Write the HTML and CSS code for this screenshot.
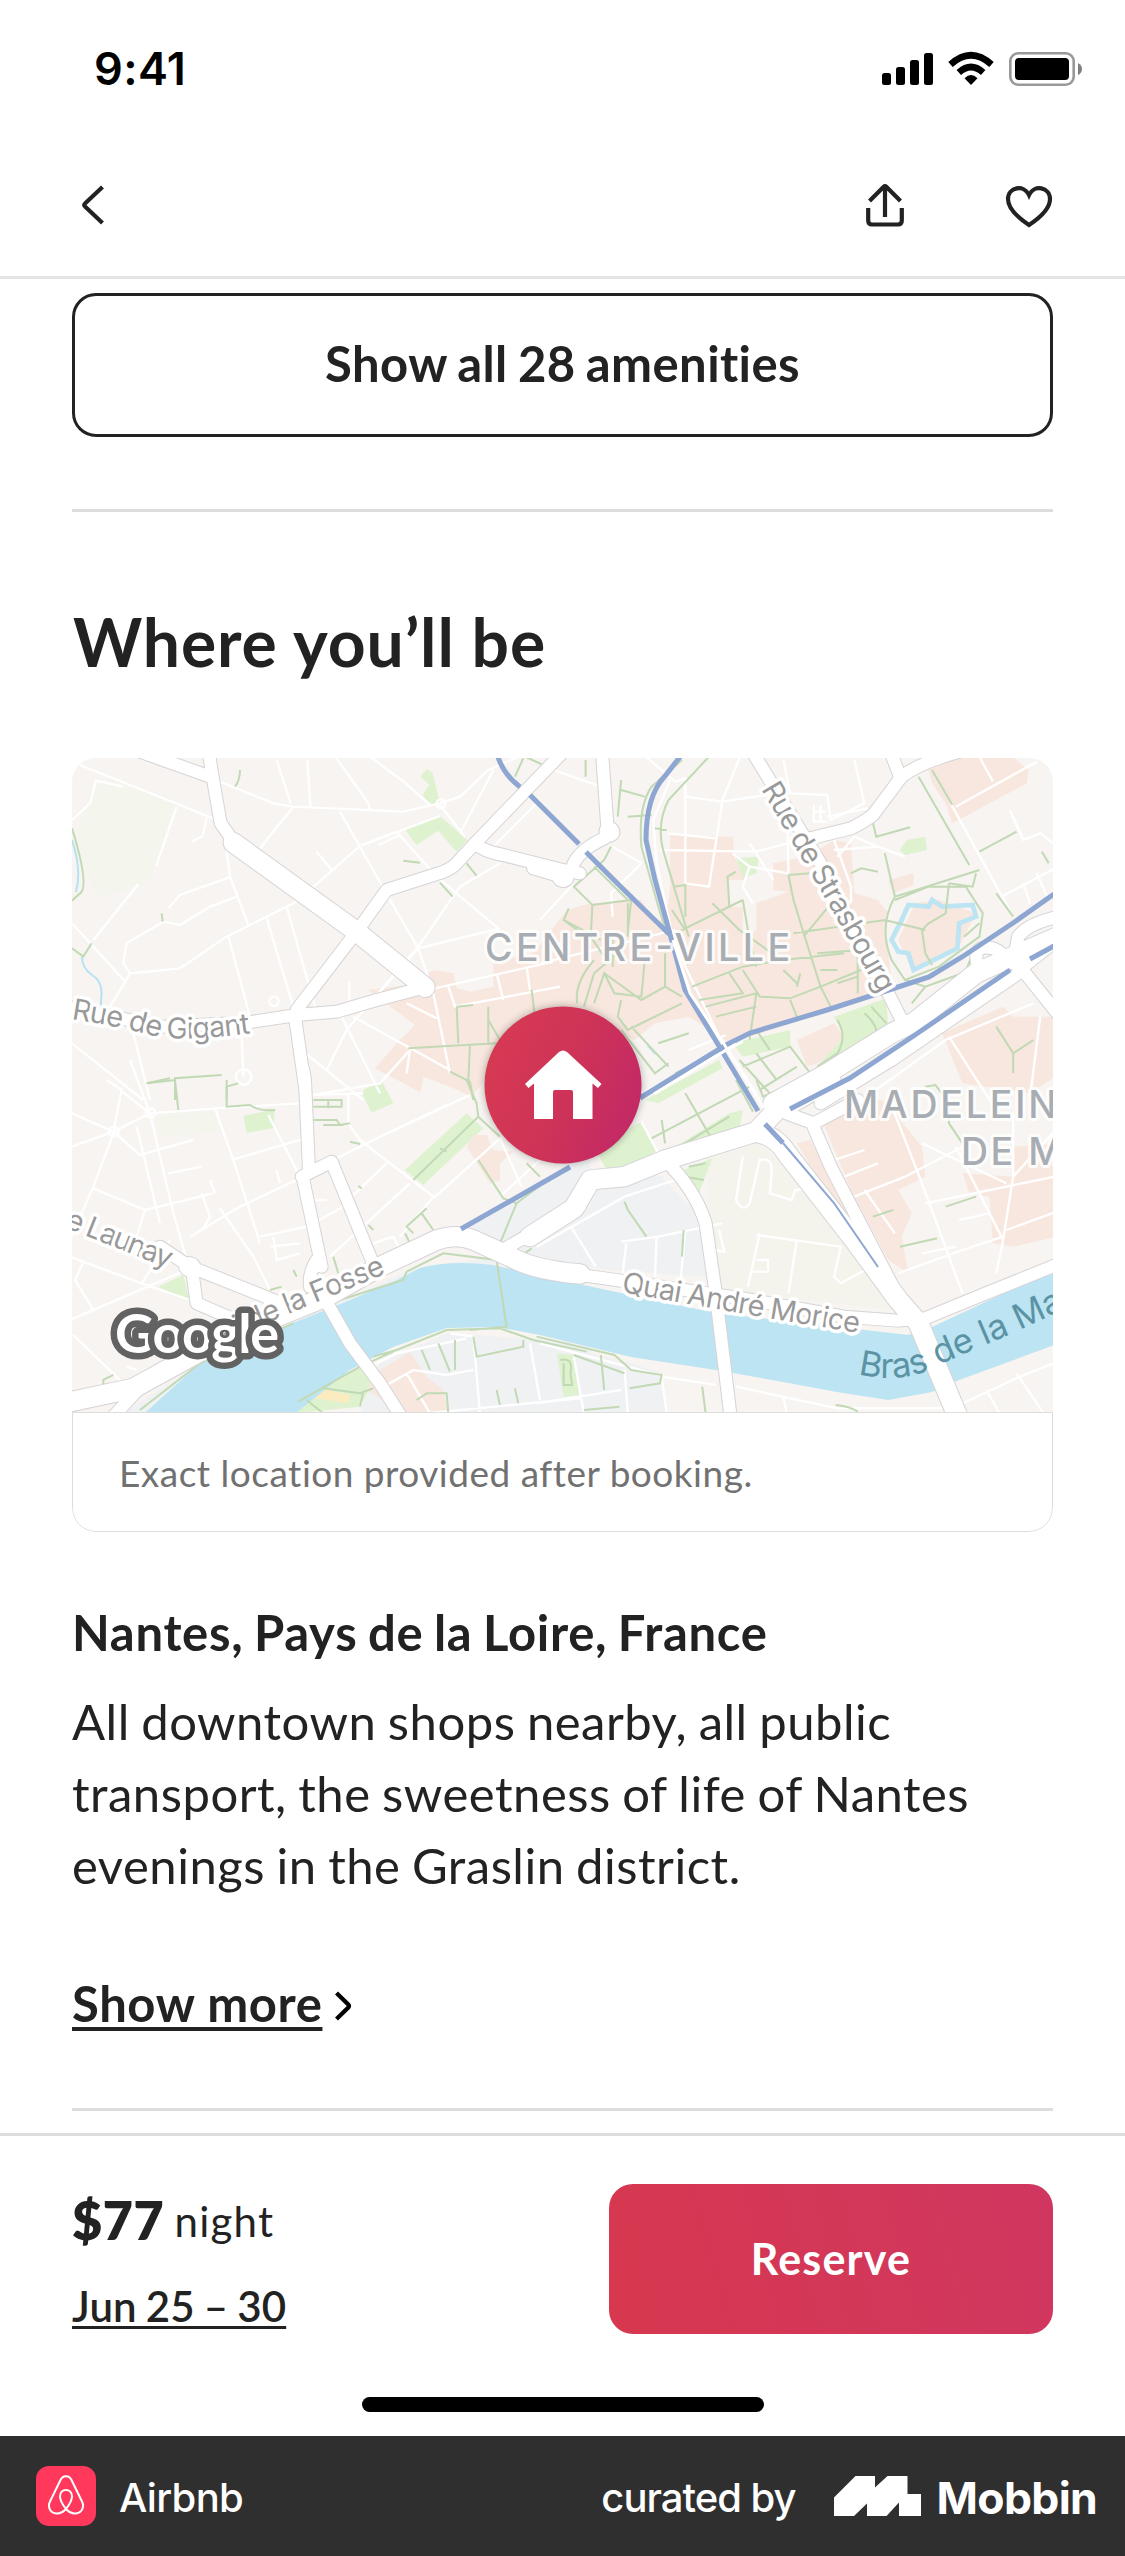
FILE: index.html
```
<!DOCTYPE html>
<html lang="en">
<head>
<meta charset="utf-8">
<title>Where you’ll be</title>
<link rel="stylesheet" href="styles.css">
</head>
<body>
<div class="screen">
  <header class="top">
    <div class="status">
      <span class="clock">9:41</span>
      <svg class="status-icons" width="202" height="36" viewBox="881 51 202 36" aria-hidden="true">
        <rect x="882" y="73" width="9" height="12" rx="2.5"/>
        <rect x="896" y="67" width="9" height="18" rx="2.5"/>
        <rect x="910" y="60" width="9" height="25" rx="2.5"/>
        <rect x="924" y="53" width="9" height="32" rx="2.5"/>
        <g fill="none" stroke="#000" stroke-width="6.6">
          <path d="M950.5 64.500Q971 46 991.500 64.500"/>
          <path d="M958.800 72.500Q971 61.500 983.200 72.500"/>
        </g>
        <path d="M964.500 78.200Q971 72 977.500 78.200L971 85Z"/>
        <rect x="1010.300" y="53.300" width="63.400" height="31.400" rx="8" fill="none" stroke="#999" stroke-width="2.600"/>
        <rect x="1015" y="58" width="54" height="22" rx="4"/>
        <path d="M1078 63Q1082 65 1082 69T1078 75Z" fill="#808080"/>
      </svg>
    </div>
    <nav class="nav">
      <svg width="24" height="46" viewBox="81 183 24 46" fill="none" stroke="#222" stroke-width="4.200" aria-label="Back"><path d="M102.500 186L85 202.500Q83.300 204 85 205.500L102.500 222"/></svg>
      <span class="nav-actions">
        <svg width="40" height="46" viewBox="865 183 40 46" fill="none" stroke="#222" stroke-width="4.200" aria-label="Share"><path d="M885 216V185M869.500 200L883.500 186Q885 184.500 886.500 186L900.500 200M868.200 207V219.500Q868.200 223.500 872 223.500H898Q901.800 223.500 901.800 219.500V207"/></svg>
        <svg width="48" height="46" viewBox="1005 184 48 46" fill="none" stroke="#222" stroke-width="4.200" aria-label="Save"><path d="M1029 225C1017 217 1008 208 1008 199C1008 187 1024 184 1029 195C1034 184 1050 187 1050 199C1050 208 1041 217 1029 225Z"/></svg>
      </span>
    </nav>
  </header>

  <main class="content">
    <button class="amenities">Show all 28 amenities</button>
    <hr class="rule rule-first">
    <h1 class="heading">Where you’ll be</h1>

    <section class="map-card">
      <svg class="map" viewBox="72 758 981 654" width="981" height="654" role="img" aria-label="Map of Nantes">
        <defs>
          <linearGradient id="pin" x1="0" y1="0.300" x2="1" y2="0.700"><stop offset="0" stop-color="#d63a52"/><stop offset="0.500" stop-color="#cf3357"/><stop offset="1" stop-color="#c22966"/></linearGradient>
          <path id="l-gigant" d="M71 1019Q122 1027 150 1035T252 1033"/>
          <path id="l-stras" d="M761 789L811 874L849 940L895 1022"/>
          <path id="l-launay" d="M64 1227L172 1270"/>
          <path id="l-fosse" d="M190 1358L262 1325L387 1273L405 1266"/>
          <path id="l-quai" d="M621 1292L689 1304L773 1319L865 1334"/>
          <path id="l-bras" d="M858 1374Q905 1386 945 1362L1013 1333L1110 1288"/>

          <g id="major">
            <g transform="translate(60 740) scale(.3333)">
              <path class="w40" d="M445 30L462 135L482 250L525 310M240 35L450 110M1245 310Q1270 335 1330 345L1500 388L1560 400"/>
              <path class="w60" d="M520 308L890 575L1095 742"/>
              <path class="w40" d="M1520 25L1245 310L1185 375Q1160 395 1130 402L980 450L890 575L710 810"/>
              <path class="w40" d="M1095 742L950 780L830 815L710 825L560 848L300 860L20 800M705 830L735 1040"/>
            </g>
            <g transform="translate(540 740) scale(.338 .3333)">
              <path class="w40" d="M183 30L200 270Q205 290 180 300Q120 330 100 370Q90 410 70 412L-20 385"/>
              <path class="w60" d="M66 411L70 412M205 275L206 276"/>
              <path class="w40" d="M625 30L830 370L1010 720L1070 840M1240 35Q1120 70 1070 110L985 225Q960 245 920 265L760 305M1035 30L1065 110"/>
              <path class="w60" d="M690 1090L850 1000L1040 880L1110 845L1290 700L1420 640L1600 560"/>
              <path class="w40" d="M830 1090L1040 960L1430 690M1420 680L1570 870M1300 690Q1270 610 1340 625Q1400 650 1330 680M1590 520Q1450 540 1415 590L1400 670M1430 680L1580 560"/>
            </g>
            <g transform="translate(60 1080) scale(.3333)">
              <path class="w40" d="M730 -30L735 0L747 270M725 290L815 245L937 545M728 290L785 560M770 540Q745 580 750 620M300 500L390 560L640 660L700 690M395 560L410 670L560 735M1320 515L1500 410L1560 380M160 1010L260 900"/>
              <path class="w60" d="M387 560L392 562"/>
              <path class="w60" d="M20 968L220 925L420 815L640 715L800 650L960 560L1130 480Q1190 460 1240 480L1350 530Q1420 570 1560 582"/>
              <path class="w40" d="M785 640L870 790L960 910L1030 1020"/>
            </g>
            <g transform="translate(540 1080) scale(.338 .3333)">
              <path class="w60" d="M-30 470L100 385L150 300L250 290L370 240L640 155L700 90L760 60L860 0M650 160Q700 170 730 220L930 480L1060 660L1120 730L1240 1020"/>
              <path class="w40" d="M370 240Q460 330 490 430L520 640L565 1020M940 60L810 130L730 100M805 130L860 260L1080 690"/>
              <path class="w40" d="M-20 565L190 595L600 655L900 710L1060 722L1140 715L1320 640L1600 525"/>
            </g>
          </g>
        </defs>

        <rect x="72" y="758" width="981" height="654" fill="#f7f4f1"/>

        <!-- built-up, green and industrial areas -->
        <g transform="translate(60 740) scale(.3333)">
          <path class="meadow" d="M95 150L150 120L360 195L260 430L120 470L36 330Z"/>
          <path class="peach" d="M925 750L1045 735L1120 690L1180 700L1190 745L1230 755L1300 740L1300 670L1560 600L1560 820L1400 820L1290 1000L1235 1070L1170 1040L1090 1010L1080 1055L945 985L1020 900L1065 855Z"/>
          <path class="park" d="M1035 268L1140 228L1222 300L1190 335L1135 272L1070 315ZM1082 110L1100 88L1118 98L1140 190L1110 192L1088 165L1108 135ZM910 1050L965 1022L1000 1090L940 1115Z"/>
        </g>
        <g transform="translate(540 740) scale(.338 .3333)">
          <path class="peach" d="M-20 640L80 510L150 490L300 480L345 560L380 490L385 440L385 285L570 290L575 350L610 420L555 420L560 500L600 500L600 600L640 570L640 490L735 455L690 450L690 370L790 350L870 300L920 310L930 460L1000 480L1030 520L1020 570L1040 720L1020 760L560 910L520 880L440 830L340 850L280 900L130 820L-20 800ZM1150 90L1240 50L1400 52L1445 90L1440 130L1220 250L1200 190L1160 130ZM1030 420L1105 400L1105 435L1045 460ZM1060 600L1110 490L1180 480L1290 520L1240 620L1100 690ZM760 900L870 850L900 890L870 950L790 980ZM1190 880L1370 800L1400 830L1570 830L1570 980L1450 1060L1250 1030Z"/>
          <path class="park" d="M580 355L648 350L640 400L600 415ZM1065 330L1085 300L1140 290L1145 330L1080 345ZM870 830L1025 775L1030 860L960 940L880 980L810 990L900 890ZM570 910L740 870L740 920L600 950ZM310 1080L530 960L540 985L350 1090Z"/>
          <path class="water-line" d="M1160 480L1150 500L1090 495L1070 540L1040 600L1060 635L1090 640L1105 690L1235 625L1240 550L1290 530L1280 495L1190 500Z"/>
          <path d="M315 905L345 940L340 945L318 920Z" fill="#bce4f2"/>
        </g>
        <g transform="translate(60 1080) scale(.3333)">
          <path class="grey" d="M1200 450L1500 275L1590 220L1590 600L1400 560L1320 500ZM900 1000L960 850L1160 760L1590 790L1590 1000ZM190 1000L420 850L850 660L1050 570L1300 530L1320 560L1100 590L850 690L260 1000Z"/>
          <path class="meadow" d="M290 110L450 90L500 150L300 175Z"/>
          <path class="park" d="M550 108L645 88L640 145L560 158ZM1035 270L1220 100L1270 145L1090 315ZM295 620L370 585L390 665ZM740 960L900 860L940 910L900 980L700 1000ZM905 38L960 5L995 70L935 98Z"/>
          <path class="peach" d="M1220 200L1240 165L1280 165L1300 210L1360 215L1320 250L1320 300L1290 310ZM1000 -10L1090 0L1080 38ZM920 930L960 870L1050 815L1100 890L1150 930L1165 1000L1030 1000Z"/>
          <path d="M780 925L870 945L865 970L760 955Z" fill="#fbebc0"/>
        </g>
        <g transform="translate(540 1080) scale(.338 .3333)">
          <path class="grey" d="M-20 330L100 260L360 290L480 420L500 590L200 570L-20 530ZM-20 780L270 850L360 880L380 1000L-20 1000Z"/>
          <path d="M490 230L640 190L720 250L1050 690L520 630L500 400Z" fill="#f4f3ec"/>
          <path class="park" d="M160 200L300 125L345 210L300 250L200 275ZM370 220L560 100L600 90L590 150L400 230ZM425 270L510 235L470 340ZM50 820L100 825L115 945L70 950Z"/>
          <path class="peach" d="M830 110L900 60L1010 60L1050 100L1130 200L1140 290L1060 330L1100 400L1070 470L1090 580L1030 540L920 330ZM760 190L800 180L950 480L1000 560L900 420ZM1250 280L1400 290L1400 200L1570 190L1570 460L1400 500L1340 490L1330 350L1270 340Z"/>
        </g>
        <path class="water" d="M146 1412L200 1363L293 1323L343 1303L397 1280L420 1268Q450 1260 493 1265L560 1280L621 1293L716 1313L865 1330L908 1335L932 1327L1060 1267V1343L959 1380L932 1392L888 1400L837 1392L783 1382L716 1370L631 1357L540 1335L497 1327L447 1328L393 1347L350 1370L297 1412Z"/>

        <!-- streets -->
        <g class="minor">
          <g transform="translate(60 740) scale(.3333)">
            <path d="M60 75L360 195L465 238M36 240L90 190L108 122L190 140M350 200L288 380M440 235L428 288L395 305M480 125L640 190L700 200L1030 215L1140 190L1200 170L1285 90L1400 40M650 60L692 190M742 60L752 205M830 55L925 190L930 210M930 50L1035 128L1110 195M700 200L600 325M840 215L990 480L1075 625L1120 760L1170 1000M755 445L900 318L1140 228M900 318L1010 275M1010 275L1130 410L1320 570M1140 195L1215 290M1300 90L1200 280M1440 180L1290 330M955 315L1020 285M1320 370L1200 440L1075 620L860 870L800 990M1075 625L1320 565M1075 625L930 790M500 335L510 410L565 555M235 432L100 600M515 410L360 465L325 505M530 470L450 500L360 555L310 545L200 610L190 670L210 700L360 685L500 590L710 485M36 550L200 730M620 535L700 800M680 500L765 800M505 590L570 830M210 700L120 850M36 910L250 1080M220 880L270 1080M545 890L550 1010M770 335L815 390M730 935L910 1080M845 830L960 1060M1040 790L1130 835M880 830L1170 990M1050 930L960 1030L760 1065M1125 745L1480 665M1165 740L1185 800L1500 740M1310 700L1330 780M1400 680L1410 750M1050 930L1040 1000M868 725V790"/>
            <circle cx="642" cy="784" r="14"/><circle cx="551" cy="1011" r="23"/><circle cx="1143" cy="191" r="13"/>
          </g>
          <g transform="translate(540 740) scale(.338 .3333)">
            <path d="M290 30L400 125L430 115L430 430L500 440L520 310L540 180L600 30M385 120L335 240L345 370L390 580L430 680L530 890L640 1060M430 170L540 185L730 155L735 400M720 60L740 160L850 165L860 240L960 190L930 60M380 280L520 295M355 330L640 335L770 300M570 340L620 380L735 400M620 380L600 440L630 490M620 310L690 420M810 195V245H850M830 195V245M845 215H810M970 205L850 230M870 300L920 440L920 490M870 330L1000 320M880 350L930 290L1000 320L1080 350M0 670L400 570M40 90L180 140M215 320L300 370L210 460L215 530M0 540L100 430M1230 200L1470 65M1300 50L1340 125M1215 190L1400 530M1390 210L1430 300L1480 280L1570 350M1365 470L1570 360M1430 430L1450 490M1470 400L1500 470M300 1060L600 905M440 930L550 885M1210 890L1330 1080M980 1060L1200 900L1460 790M1480 830L1450 1070"/>
          </g>
          <g transform="translate(60 1080) scale(.3333)">
            <path d="M36 100L160 155L270 100L470 85L720 70M36 200L160 155L240 225L400 180M160 155L185 30L140 0M160 160L100 320L30 480M270 100L340 400L380 540M180 30L270 100L210 -60M230 140L300 430M100 325L255 390L460 340M325 280L425 260M255 390L230 470M425 340L450 410L430 445M450 300L465 340M465 85L520 240L600 490M515 240L735 175M625 105L720 290M650 270L660 310M390 470L540 380L710 300M480 385L580 530L630 630M640 470L650 540L720 520M630 500L720 490M600 470L740 440L850 380M760 360H800M30 530L245 610L390 660M70 545L45 600L100 690M245 610L330 480M30 720L380 570M40 765L200 920M200 860L230 870M750 45L910 40M865 40V130L900 180L1120 350L1020 470M940 180L1230 45M760 270L940 180L1160 75M870 355L980 250M810 530L1050 310M1120 355L1320 175L1385 320M940 490L1000 470L1020 510M1320 350L1440 240M1170 760L1240 770L1260 1000M930 860L1010 820L1220 775M980 915L1060 870L1160 885L1240 870M1040 880L1110 1000M1410 790L1440 960M1100 1000L1560 955"/>
            <circle cx="271" cy="99" r="14"/><circle cx="161" cy="155" r="15"/>
          </g>
          <g transform="translate(540 1080) scale(.338 .3333)">
            <path d="M-10 500L250 350L400 300M95 445L165 560M240 485L350 470L540 430M255 490L245 580M345 470L340 590M430 450L415 610M300 125L350 220M600 230L580 360Q600 400 620 370L650 240Q690 230 685 280L680 340L745 360L755 330L790 325M650 460L615 620M640 465L890 500L870 590L890 610L980 560M760 480L735 640M640 540H675V575H630M530 450L545 515L520 510M1030 50L1130 310L1250 640M1130 190L1380 310M930 350L1080 290L1250 200M870 240L960 210M900 290L1000 250M1140 370L1570 280M1230 200L1370 480L1350 580M1060 580L1250 510L1370 470M1130 520L1230 500M1400 290L1570 100M1380 450L1570 380M1240 420L1330 400M1400 100L1400 290L1370 480M960 330L1050 460M360 890L520 915M580 920L880 985L1190 985M100 830L130 1000M250 870L260 1000M360 890L375 1000M-10 970L240 930M0 790L370 890M720 950L730 1000M1230 980L1420 890L1570 830M1320 930L1360 1000M1410 880L1490 1000"/>
          </g>
        </g>

        <!-- footpaths -->
        <g class="path">
          <g transform="translate(60 740) scale(.3333)">
            <path d="M540 90Q540 120 525 140M36 265Q90 440 60 460L36 482M95 610L70 650L36 625M305 520L308 545M1030 362L1080 368M1220 370L1250 408M1140 428L1178 470M1390 55L1365 110M1395 50L1450 75M260 1030L330 1015M345 1080V1015L485 1005M500 1080V1040L535 1030M1045 925L1310 910M1190 800L1195 910M1190 800L1240 795M1285 800V910M1285 840L1320 900M1230 915L1225 1025M1170 995L1230 1025L1240 1080M1415 750L1425 830"/>
          </g>
          <g transform="translate(540 740) scale(.338 .3333)">
            <path d="M420 60L330 140Q290 200 300 320L350 500L375 580M500 50L380 180Q340 260 370 350L440 590M240 120L230 230M240 150L310 170M260 230L330 225M340 265L375 270M135 60V110M210 320L190 360L100 440L155 495L270 480L260 570M160 380L260 480M85 505L70 540L110 570M155 495L150 590L190 650M260 490V590M70 540L180 600M560 500L555 410L580 395M600 480L620 600L640 680M400 580L600 480M390 510L430 570M395 440L430 435V530M735 405L750 480L780 580L830 740L860 800M735 405L800 400M780 590L870 480M510 490L590 570L700 650M750 580L1020 540L1140 570M820 640L950 630M450 740L600 680L720 660L900 640M600 690L650 770L740 775L830 740L950 690M470 780L600 760L560 700M490 800L640 760L620 900M520 830L640 800M720 690L760 730M760 740L770 700M830 690L880 690M880 730L940 710M940 630V760M740 780L760 830M130 800L160 700L230 640M110 790Q100 730 160 660M160 790L190 700L220 760L300 770L310 660M190 700L300 780L370 740L420 770M370 740V640M215 680V600M240 780L230 830L260 870L420 790M350 910L440 880M270 860L380 980M240 870L340 1000L380 970M1020 340L1050 470L1300 390M985 250L995 290L1095 262M1120 110L1270 375M1160 90L1220 195M1300 335L1410 275M1485 335L1505 370M920 400L950 385L1000 395M1050 470Q1000 560 1040 660L1080 720L1180 680L1300 590L1310 520L1260 440L1150 440L1050 480M1210 430L1200 520L1150 550L1130 570L1140 640L1160 675M1210 430L1280 440L1290 400M1255 590L1300 550M1350 460L1400 530M1080 720L1140 740L1250 700M1100 790L1140 740M1120 800L1250 720L1280 640M1350 860L1400 940L1460 900M1400 940L1400 1000M590 960L680 1060M600 980L740 920L800 1000M640 940L700 1020M650 1050L760 980M880 840Q910 890 880 940L820 980M960 820Q1050 900 910 950L860 990M980 800L1025 850M640 870L680 930M400 1000L540 930"/>
          </g>
          <g transform="translate(60 1080) scale(.3333)">
            <path d="M260 10L345 0L355 90M500 0V80L570 75Q600 95 645 90M760 60H805V85M760 80H845V60H800M760 120H830L840 135L870 130M790 135H850M870 185L900 192M1060 300L1255 110L1250 70L1220 0M1255 110L1320 170M1140 205L1160 215M1255 240L1330 355L1370 370L1320 490M1370 370L1450 310M1400 250L1440 290M1100 385L1040 440L1060 460M1085 400L1120 450M1035 460L1050 490M925 435L940 450M895 318L905 325M820 530L835 580M630 630L665 620M700 570L710 590M130 920L130 900L160 885M90 975L150 955L130 970M240 990L420 850L700 730M840 660L1030 600L1040 575L1150 520L1310 540L1340 740L1230 750M1310 540L1340 745M940 830L1010 810L1160 750L1320 745L1420 780L1580 815M715 965L900 860L1000 815M740 960L790 1000M790 925L900 940L940 925M900 980L910 935M1240 770L1250 830L1390 800V780M1185 780V870M1135 790L1170 875M1085 810L1110 870M1070 960L1100 940L1160 940L1165 1000M1310 930L1320 975M1365 925L1375 970M1380 530L1415 505"/>
          </g>
          <g transform="translate(540 1080) scale(.338 .3333)">
            <path d="M250 365L260 390L315 470M425 450L420 530M430 40L510 180M330 175L620 20M360 120L370 190M380 220L560 110M430 290L485 300M440 260L490 250M985 410L1045 390M1065 500L1175 475M1200 380L1290 350M1140 20L1170 15L1210 70V130L1250 190M580 0L630 95M640 0L660 50L770 0M-10 770L220 825L270 870L360 885L355 910L265 925M100 825L250 880M180 825L190 930M480 920L490 1000M130 990L235 980M875 975Q920 980 940 995M60 840Q100 830 90 880L95 915H70V850M880 390L800 280L700 170"/>
          </g>
        </g>
        <path d="M72 840Q82 870 76 892M82 957Q82 968 92 975Q104 982 101 1000V1005" fill="none" stroke="#b5e2f3" stroke-width="2"/>

        <use href="#major" class="casing"/>
        <use href="#major" class="fill"/>

        <!-- tram lines -->
        <g class="rail">
          <path d="M498 757Q504 775 520 787M530 795L579 844M586 852L618 884L669 934M683 753L665 776Q646 796 646 840L655 880L670 934L685 990L719 1046L758 1111M765 1124L783 1143"/>
          <path d="M1054 894L1013 923L962 957L929 977L895 988L827 1010L750 1033L726 1045L640 1098M570 1167L461 1229"/>
          <path d="M1054 946L1030 959M1010 970L912 1037L850 1078L790 1109"/>
          <path d="M783 1143L834 1203L878 1267" stroke-width="2"/>
        </g>
        <path class="tram-gap" d="M673 940L690 993L724 1044L764 1108M736 1044L654 1094"/>

        <!-- place and street names -->
        <g class="place">
          <text x="485" y="961" textLength="305">CENTRE-VILLE</text>
          <text x="844" y="1117.500" textLength="238">MADELEINE</text>
          <text x="961" y="1164.500" textLength="232">DE MALLEV</text>
        </g>
        <g class="street">
          <text textLength="182"><textPath href="#l-gigant">Rue de Gigant</textPath></text>
          <text textLength="237"><textPath href="#l-stras">Rue de Strasbourg</textPath></text>
          <text textLength="112"><textPath href="#l-launay">e Launay</textPath></text>
          <text textLength="214"><textPath href="#l-fosse">Quai de la Fosse</textPath></text>
          <text textLength="241"><textPath href="#l-quai">Quai André Morice</textPath></text>
        </g>
        <text class="river"><textPath href="#l-bras">Bras de la Madeleine</textPath></text>
        <text class="google" x="115" y="1353" textLength="164">Google</text>

        <circle class="pin-shadow" cx="563" cy="1085" r="78"/>
        <circle cx="563" cy="1085" r="78.500" fill="url(#pin)"/>
        <path d="M563 1050.500Q565 1050.500 567 1052L601.500 1084L598 1088L592.500 1083.500V1119H573V1092Q573 1090 571 1090H555Q553 1090 553 1092V1119H534V1083.500L528.500 1088L525 1084L559 1052Q561 1050.500 563 1050.500Z" fill="#fff"/>
      </svg>
      <p class="map-note">Exact location provided after booking.</p>
    </section>

    <h2 class="place-name">Nantes, Pays de la Loire, France</h2>
    <p class="about">All downtown shops nearby, all public<br>transport, the sweetness of life of Nantes<br>evenings in the Graslin district.</p>
    <a class="more"><span class="more-text">Show more</span><svg width="20" height="32" viewBox="0 0 20 32" fill="none" stroke="#000" stroke-width="4.200" aria-hidden="true"><path d="M3.500 3L15.500 14.700Q16.500 16 15.500 17.300L3.500 29"/></svg></a>
    <hr class="rule rule-last">
  </main>

  <section class="booking">
    <div class="booking-row">
      <div class="price-box">
        <div class="price"><b>$77</b> <span class="unit">night</span></div>
        <a class="dates">Jun 25 – 30</a>
      </div>
      <button class="reserve">Reserve</button>
    </div>
    <div class="home-indicator"></div>
  </section>

  <footer class="credit">
    <svg width="60" height="60" viewBox="0 0 60 60" aria-hidden="true">
      <rect width="60" height="60" rx="13" fill="#ff385c"/>
      <path d="M30 43C26.500 38.500 24 34 24 30.500C24 26.500 26.500 24 30 24S36 26.500 36 30.500C36 34 33.500 38.500 30 43C24.500 49 17.500 48.500 14.500 44.500C12.500 41.500 12.500 38.500 14 35.500L24.500 14C27 9 33 9 35.500 14L46 35.500C47.500 38.500 47.500 41.500 45.500 44.500C42.500 48.500 35.500 49 30 43Z" fill="none" stroke="#fff" stroke-width="2"/>
    </svg>
    <span class="app">Airbnb</span>
    <span class="curated">curated by</span>
    <svg class="mark" width="87" height="40" viewBox="0 0 87 40" fill="#fff" aria-hidden="true"><path d="M0 21.500L21.500 0H41V11.500L53.500 0H73.500V18H87V40H65V26.500L52.500 40H33V27.500L20 40H0Z"/></svg>
    <span class="brand">Mobbin</span>
  </footer>
</div>
</body>
</html>
```
FILE: styles.css
```
* { box-sizing: border-box; }

body {
  margin: 0;
  background: #fff;
  color: #222;
  font-family: Lato, "Open Sans", sans-serif;
}

h1, h2, p { margin: 0; font-weight: 400; }
button { font-family: inherit; color: inherit; cursor: pointer; }

.screen {
  width: 1125px;
  height: 2556px;
  overflow: hidden;
  display: flex;
  flex-direction: column;
}

/* status bar and navigation */
.top { height: 279px; flex: none; border-bottom: 3px solid #e4e4e4; }
.status {
  height: 137px;
  padding: 0 42px 0 94px;
  display: flex;
  align-items: center;
  justify-content: space-between;
}
.clock { font: 600 45px/60px Inter, sans-serif; color: #000; letter-spacing: 0.4px; }
.nav {
  height: 139px;
  padding: 0 72px 0 81px;
  display: flex;
  align-items: center;
  justify-content: space-between;
}
.nav-actions { display: flex; gap: 100px; }

/* page content */
.content { padding: 14px 72px 22px; display: flex; flex-direction: column; flex: none; }
.amenities {
  height: 144px;
  padding: 0 0 4px;
  border: 3px solid #222;
  border-radius: 24px;
  background: #fff;
  font-size: 49px;
  font-weight: 700;
  letter-spacing: 0.4px;
  word-spacing: -2px;
}
.rule { width: 100%; height: 3px; border: 0; margin: 0; background: #ddd; }
.rule-first { margin-top: 72px; }
.rule-last { margin-top: 75px; }
.heading {
  margin: 90px 0 76px 1px;
  font-size: 66px;
  line-height: 80px;
  font-weight: 700;
  letter-spacing: 0.9px;
}

/* map */
.map-card { height: 774px; border-radius: 24px; overflow: hidden; }
.map { display: block; }
.map-note {
  height: 120px;
  padding-left: 46px;
  border: 1px solid #ddd;
  border-radius: 0 0 24px 24px;
  color: #717171;
  font-size: 37px;
  line-height: 119px;
  letter-spacing: 0.5px;
}
.park { fill: #def2d0; }
.meadow { fill: #f4f5ed; }
.peach { fill: #f8e7de; }
.grey { fill: #eff1f3; }
.water { fill: #bce4f2; }
.water-line { fill: none; stroke: #bce4f2; stroke-width: 14px; }
.minor { fill: none; stroke: #fff; }
.minor path, .minor circle { stroke-width: 7px; }
.path { fill: none; stroke: #c1d9b4; }
.path path { stroke-width: 6px; }
.w40 { stroke-width: calc(36px + var(--case)); }
.w60 { stroke-width: calc(58px + var(--case)); }
.casing, .fill { fill: none; stroke-linecap: round; stroke-linejoin: round; }
.casing { --case: 6px; stroke: #d6d4d6; }
.fill { --case: 0px; stroke: #fff; }
.rail { fill: none; stroke: #8ea6d2; stroke-width: 5px; }
.tram-gap { fill: none; stroke: #fff; stroke-width: 3px; }
.place, .street, .river {
  font-family: Inter, sans-serif;
  paint-order: stroke;
  stroke: #fff;
  stroke-linejoin: round;
}
.place { font-size: 37.5px; font-weight: 500; fill: #a8adb3; stroke-width: 6px; stroke-opacity: 0.85; }
.street { font-size: 29px; fill: #999; stroke-width: 7px; }
.river { font-size: 34.5px; fill: #5b93a4; stroke: none; }
.google {
  font-family: Lato, sans-serif;
  font-weight: 700;
  font-size: 54px;
  fill: #fff;
  stroke: #626262;
  stroke-width: 13px;
  stroke-linejoin: round;
  paint-order: stroke;
}
.pin-shadow { fill: #000; opacity: 0.35; filter: blur(4px); }

/* description */
.place-name {
  margin-top: 70px;
  font-size: 49px;
  line-height: 60px;
  font-weight: 700;
  letter-spacing: 0.7px;
  word-spacing: -2px;
}
.about {
  margin-top: 23px;
  font-size: 49px;
  line-height: 72px;
  letter-spacing: 0.5px;
  word-spacing: -1.5px;
  white-space: nowrap;
}
.more { margin-top: 72px; height: 60px; display: flex; align-items: center; gap: 11px; }
.more-text {
  font-size: 49px;
  line-height: 60px;
  font-weight: 700;
  letter-spacing: 0.6px;
  text-decoration: underline;
  text-decoration-thickness: 4px;
  text-underline-offset: 5px;
  text-decoration-skip-ink: none;
}
.more svg { margin-top: 5px; }

/* booking bar */
.booking {
  height: 303px;
  flex: none;
  border-top: 3px solid #ddd;
  padding: 48px 72px 24px;
  display: flex;
  flex-direction: column;
  justify-content: space-between;
}
.booking-row { display: flex; justify-content: space-between; }
.price-box { padding-top: 6px; }
.price { font-size: 52px; line-height: 60px; height: 60px; white-space: nowrap; }
.price b { font-weight: 800; letter-spacing: 0.6px; }
.unit { font-size: 42px; line-height: 1; letter-spacing: 1.2px; vertical-align: 3px; margin-left: -3px; }
.dates {
  display: inline-block;
  margin-top: 31px;
  font-size: 42px;
  line-height: 50px;
  font-weight: 600;
  letter-spacing: 0.1px;
  word-spacing: -1.5px;
  text-decoration: underline;
  text-decoration-thickness: 3px;
  text-underline-offset: 4px;
  text-decoration-skip-ink: none;
}
.reserve {
  width: 444px;
  height: 150px;
  padding: 0 0 1px;
  border: 0;
  border-radius: 24px;
  background: linear-gradient(75deg, #d7384f, #d03660);
  color: #fff;
  font-size: 43px;
  font-weight: 700;
  letter-spacing: 1.2px;
}
.home-indicator { width: 402px; height: 15px; border-radius: 8px; background: #000; align-self: center; }

/* credit strip */
.credit {
  height: 120px;
  flex: none;
  padding: 0 28px 0 36px;
  background: #2f2f2f;
  color: #fff;
  display: flex;
  align-items: center;
  font-family: Inter, sans-serif;
  line-height: 60px;
}
.app, .curated, .brand { padding-top: 4px; }
.app { margin-left: 23px; font-size: 40px; font-weight: 500; letter-spacing: -0.7px; }
.curated { margin-left: auto; font-size: 40px; font-weight: 500; letter-spacing: -1px; }
.mark { margin-left: 38px; }
.brand { margin-left: 16px; font-size: 44.5px; font-weight: 700; letter-spacing: -0.7px; }
```
